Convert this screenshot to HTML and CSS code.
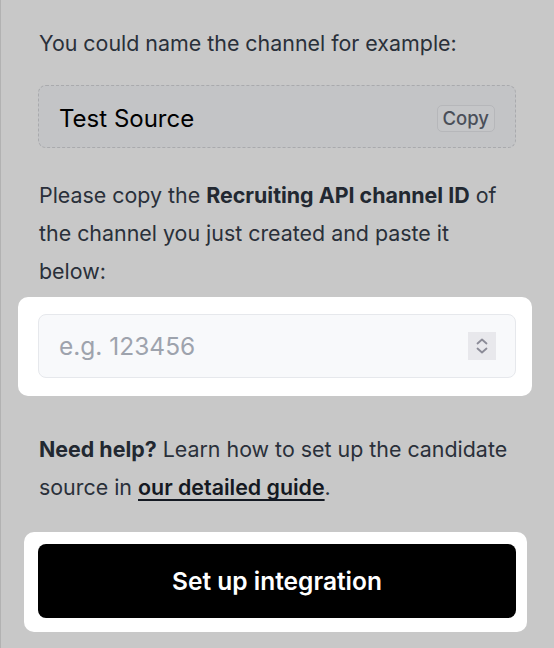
FILE: index.html
```html
<!DOCTYPE html>
<html lang="en">
<head>
<meta charset="utf-8">
<title>Set up integration</title>
<link rel="stylesheet" href="styles.css">
</head>
<body>
<main class="panel">
  <p class="text first">You could name the channel for example:</p>
  <div class="example">
    <span class="example-value">Test Source</span>
    <button class="copy" type="button">Copy</button>
  </div>
  <p class="text para">Please copy the <strong>Recruiting API channel ID</strong> of the channel you just created and paste it below:</p>
  <div class="spot spot-input">
    <div class="field">
      <input class="field-input" type="text" placeholder="e.g. 123456">
      <span class="spinner" aria-hidden="true">
        <svg width="28" height="28" viewBox="0 0 28 28">
          <path d="M9.5 11.5 L14 7.5 L18.5 11.5" fill="none" stroke="#8b8b97" stroke-width="1.8" stroke-linecap="round" stroke-linejoin="round"/>
          <path d="M9.5 16.5 L14 20.5 L18.5 16.5" fill="none" stroke="#8b8b97" stroke-width="1.8" stroke-linecap="round" stroke-linejoin="round"/>
        </svg>
      </span>
    </div>
  </div>
  <p class="text help"><strong>Need help?</strong> Learn how to set up the candidate source in <a class="link" href="#">our detailed guide</a>.</p>
  <div class="spot spot-button">
    <button class="primary" type="button">Set up integration</button>
  </div>
</main>
</body>
</html>
```
FILE: styles.css
```css
html, body {
  margin: 0;
  padding: 0;
}
body {
  background: #c8c8c8;
  font-family: Inter, "Noto Sans", "Liberation Sans", sans-serif;
  color: #2a303a;
  width: 554px;
  height: 648px;
  overflow: hidden;
  box-sizing: border-box;
  border-left: 1px solid #b2b2b2;
}
.panel {
  padding: 24px 38px 0 37px;
  display: flex;
  flex-direction: column;
}
.text {
  margin: 0;
  font-size: 21.4px;
  line-height: 38px;
  padding-left: 1px;
}
.text strong {
  font-weight: 700;
  color: #222831;
}
.example {
  margin-top: 23px;
  height: 63px;
  box-sizing: border-box;
  border: 1px dashed #a9aaad;
  border-radius: 8px;
  background: #c3c4c6;
  display: flex;
  align-items: center;
  justify-content: space-between;
  padding: 0 20px 0 20px;
}
.example-value {
  font-size: 24px;
  color: #000;
  margin-top: 3px;
}
.copy {
  font-family: inherit;
  font-size: 18.5px;
  font-weight: 500;
  color: #4a4f59;
  background: #c5c6c8;
  border: 1px solid #b6b7ba;
  border-radius: 5px;
  height: 27px;
  padding: 0 5px;
  line-height: 25px;
  margin-top: 3px;
}
.para {
  margin-top: 28px;
}
.spot {
  background: #fff;
  border-radius: 10px;
}
.spot-input {
  margin: 7px -16px 0 -20px;
  padding: 17px 16px 18px 20px;
}
.field {
  position: relative;
}
.field-input {
  display: block;
  width: 100%;
  box-sizing: border-box;
  height: 64px;
  border: 1px solid #e6e8ec;
  border-radius: 8px;
  background: #f8f9fb;
  font-family: inherit;
  font-size: 24.5px;
  color: #111;
  padding: 0 60px 0 20px;
  outline: none;
}
.field-input::placeholder {
  color: #9ea3ad;
}
.spinner {
  position: absolute;
  right: 20px;
  top: 18px;
  width: 28px;
  height: 28px;
  background: #e8e8ec;
  display: block;
}
.spinner svg {
  display: block;
}
.help {
  margin-top: 34px;
}
.link {
  color: #141922;
  font-weight: 600;
  text-decoration: underline;
  text-decoration-thickness: 2px;
  text-underline-offset: 4px;
  text-decoration-skip-ink: none;
}
.spot-button {
  margin: 26px -11px 0 -14px;
  padding: 12px 11px 14px 14px;
}
.primary {
  display: block;
  width: 100%;
  height: 74px;
  background: #000;
  color: #fff;
  border: none;
  border-radius: 8px;
  font-family: inherit;
  font-size: 24.5px;
  font-weight: 600;
  cursor: pointer;
}
```
